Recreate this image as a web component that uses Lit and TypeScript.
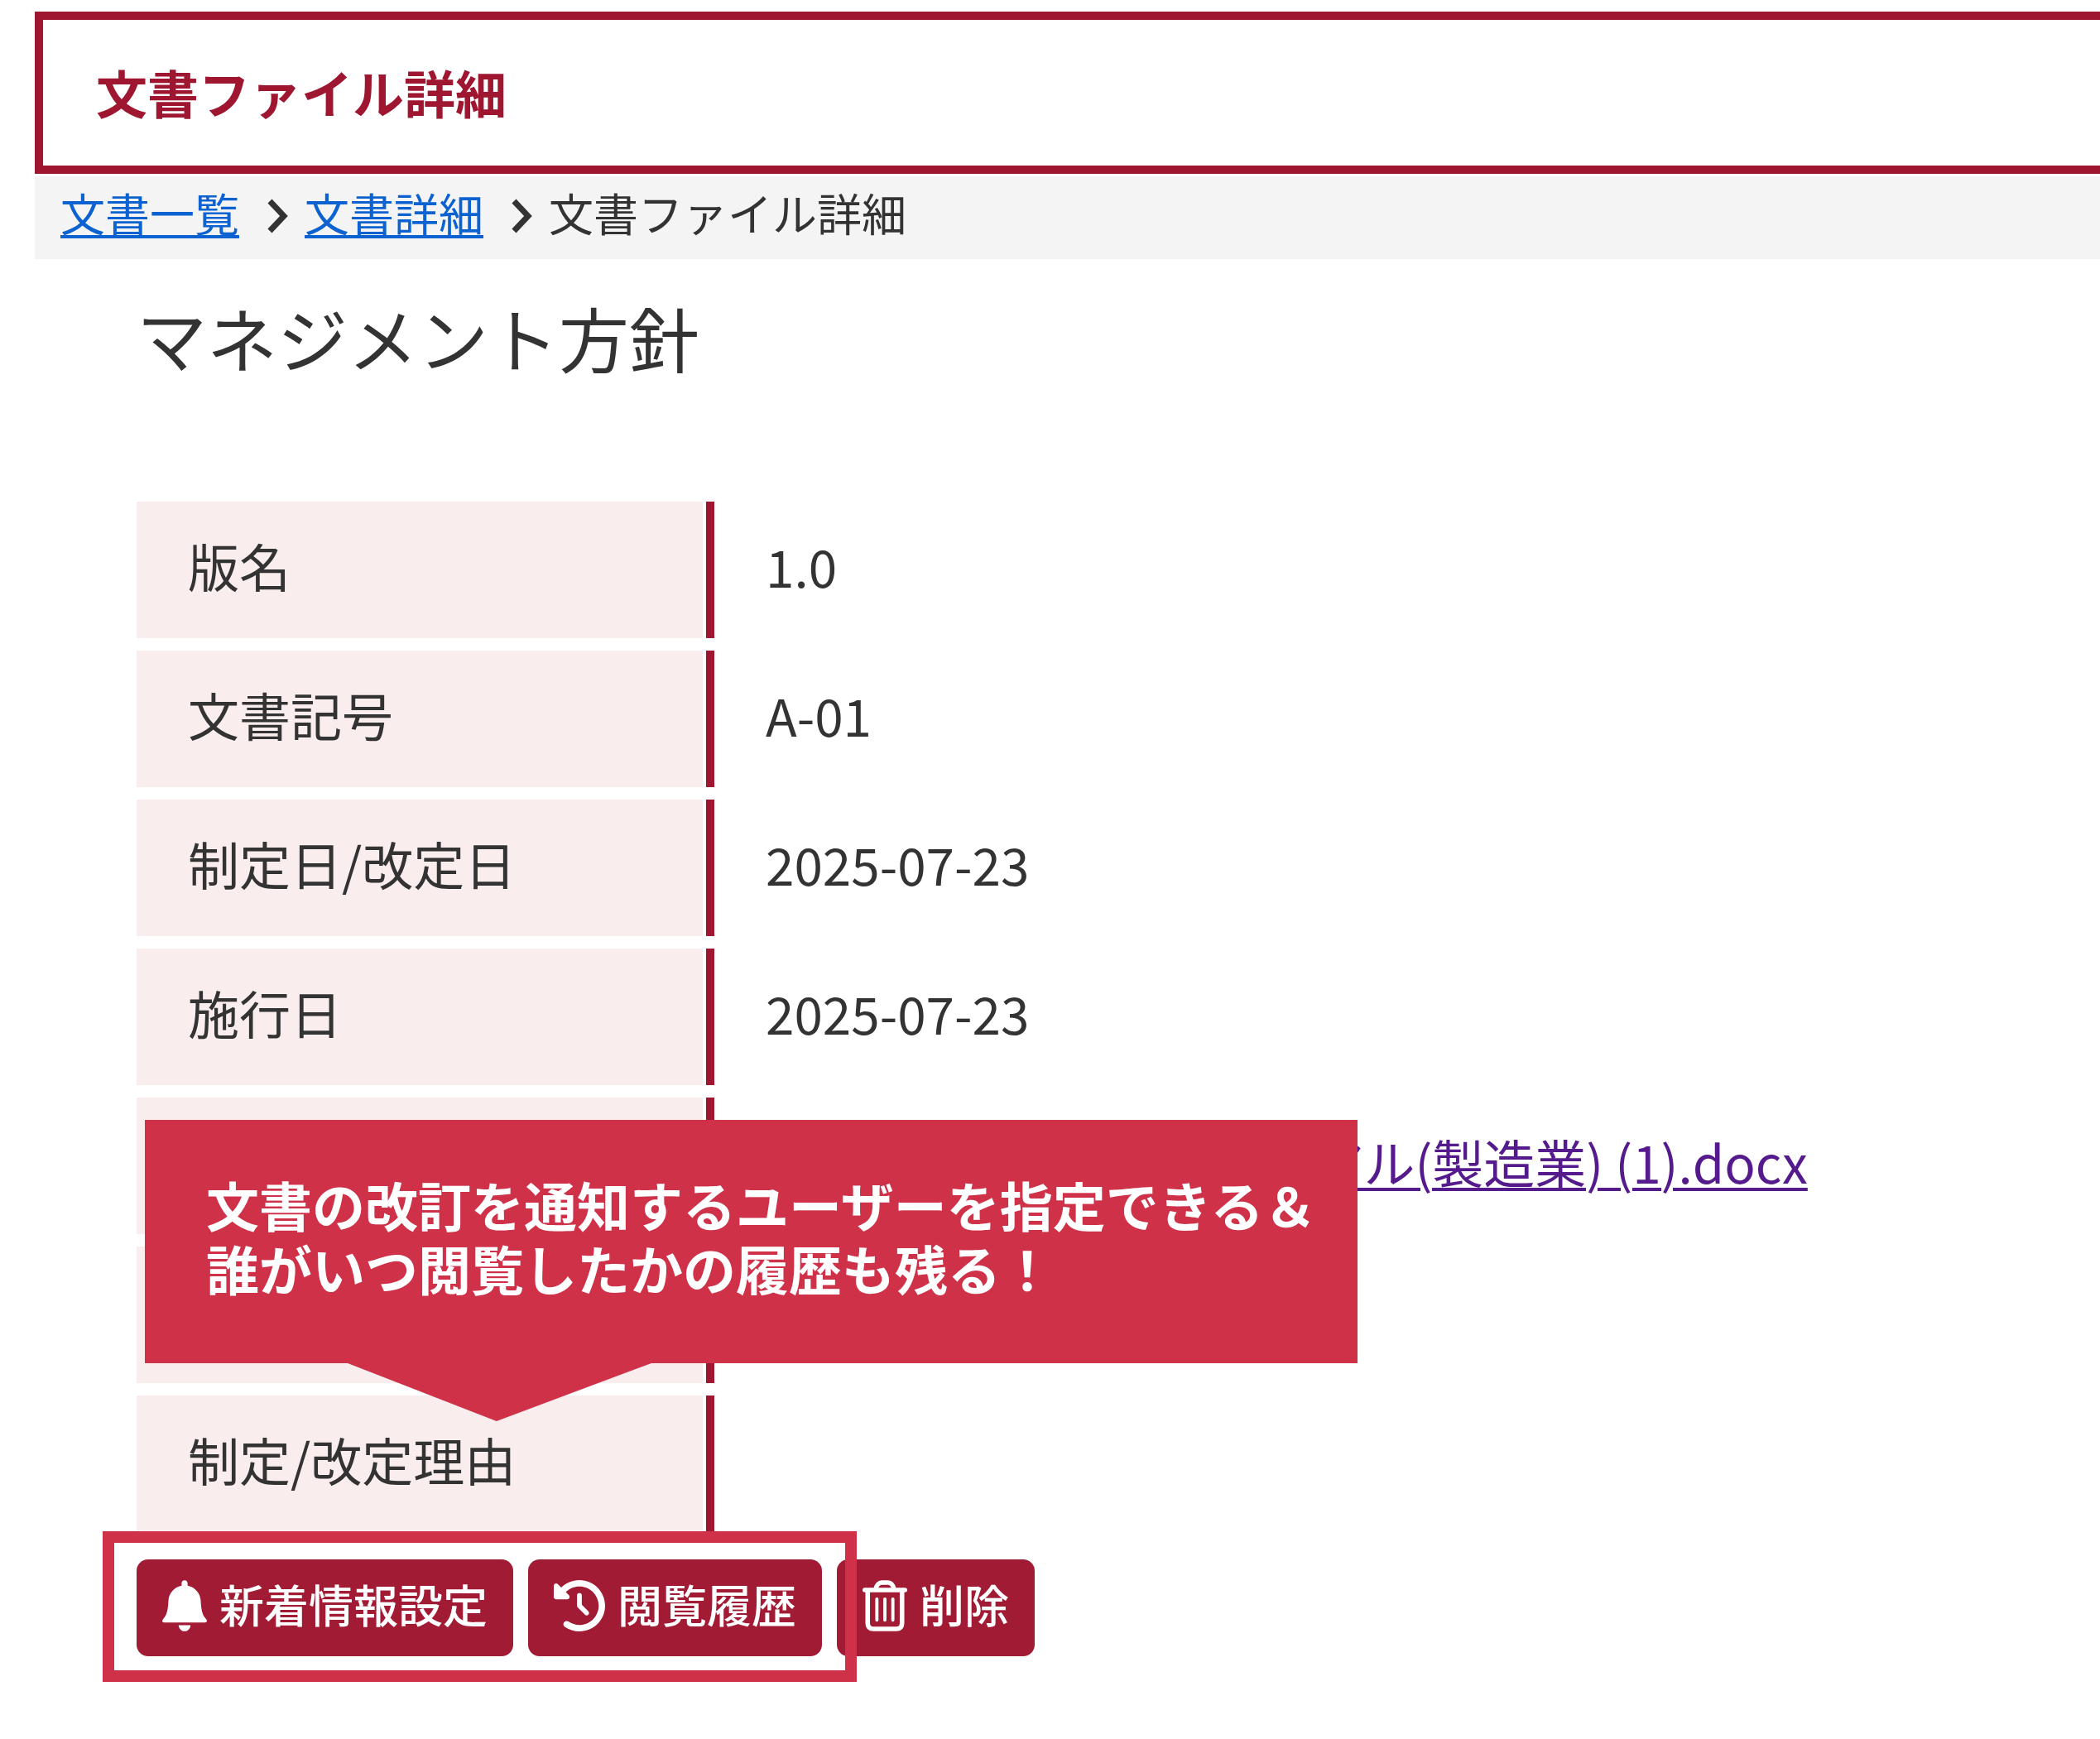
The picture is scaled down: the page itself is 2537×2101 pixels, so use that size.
import { LitElement, html, css } from "lit";
import { customElement } from "lit/decorators.js";

const bell = html`<svg class="icon" viewBox="0 0 448 512" aria-hidden="true"><path fill="currentColor" d="M224 0c-18 0-30 12-30 30v24C118 70 66 128 62 208c-4 80-14 132-40 164L4 396c-8 12-2 28 14 28h412c16 0 22-16 14-28l-18-24c-26-32-36-84-40-164-4-80-56-138-132-154V30c0-18-12-30-30-30zM164 450c2 36 30 62 60 62s58-26 60-62z"/></svg>`;
const history = html`<svg class="icon wide" viewBox="0 0 512 512" aria-hidden="true"><path fill="currentColor" d="M75 75L41 41C25.9 25.900 0 36.600 0 57.900V168c0 13.300 10.700 24 24 24H134.100c21.400 0 32.100-25.900 17-41l-30.800-30.800C155 85.500 203 64 256 64c106 0 192 86 192 192s-86 192-192 192c-40.800 0-78.600-12.700-109.700-34.400c-14.500-10.100-34.400-6.600-44.600 7.900s-6.600 34.400 7.900 44.600C151.200 495 201.700 512 256 512c141.400 0 256-114.600 256-256S397.400 0 256 0C185.300 0 121.300 28.700 75 75zm181 53c-13.300 0-24 10.700-24 24V256c0 6.400 2.500 12.500 7 17l72 72c9.400 9.400 24.600 9.400 33.900 0s9.400-24.600 0-33.900l-65-65V152c0-13.300-10.700-24-24-24z"/></svg>`;
const trash = html`<svg class="icon" viewBox="0 0 448 512" aria-hidden="true"><g fill="none" stroke="currentColor" stroke-linecap="round" stroke-linejoin="round"><path stroke-width="46" d="M23 98H425M52 98V430q0 58 58 58H338q58 0 58-58V98M130 94q18-70 62-70h64q44 0 62 70"/><path stroke-width="32" d="M144 188V400M224 188V400M304 188V400"/></g></svg>`;
const chevron = html`<svg class="chevron" viewBox="0 0 26 42" aria-hidden="true"><path fill="none" stroke="currentColor" stroke-width="7" d="M4 3L21 21L4 39"/></svg>`;

const rows = [
  { label: "版名", value: "1.0" },
  { label: "文書記号", value: "A-01" },
  { label: "制定日/改定日", value: "2025-07-23" },
  { label: "施行日", value: "2025-07-23" },
  { label: "", value: "アル(製造業) (1).docx", file: true },
  { label: "", value: "" },
  { label: "制定/改定理由", value: "" },
];

@customElement("app-root")
export class AppRoot extends LitElement {
  static styles = css`
    :host {
      display: block;
      padding: 14px 0 70px 42px;
      overflow: hidden;
      background: #fff;
      color: #333;
      font-family: "Noto Sans CJK JP", sans-serif;
      font-size: 62px;
      line-height: 90px;
    }
    .title {
      margin: 0 -10px 3px 0;
      padding: 42px 64px 44px;
      border: 10px solid #9f1631;
      color: #9f1631;
      font-size: 62px;
      font-weight: 700;
    }
    .crumbs {
      display: flex;
      align-items: center;
      gap: 20px;
      height: 100px;
      padding: 0 31px;
      background: #f4f4f4;
      font-size: 54px;
    }
    .crumb { padding-bottom: 12px; }
    .crumbs a {
      color: #0b62d0;
      text-decoration-thickness: 4px;
      text-underline-offset: 4px;
    }
    .chevron {
      width: 26px;
      height: 42px;
      margin: 0 0 4px 13px;
    }
    main { padding: 0 123px; }
    h2 {
      margin: 32px 0 137px;
      font-size: 85px;
      font-weight: 400;
      line-height: 124px;
    }
    .details { position: relative; }
    table {
      width: 100%;
      border-spacing: 0 15px;
      margin: -15px 0 18px;
      table-layout: fixed;
    }
    th, td {
      height: 165px;
      box-sizing: border-box;
      padding: 0 62px 12px;
      text-align: left;
      font-weight: 400;
      white-space: nowrap;
    }
    th {
      width: 698px;
      border-right: 10px solid #9f1631;
      box-shadow: inset -4px 0 #fff;
      background: #faeded;
    }
    .file {
      margin-left: 661px;
      color: #551a8b;
      text-decoration-thickness: 4px;
      text-underline-offset: 5px;
    }
    .actions {
      position: relative;
      display: flex;
      gap: 18px;
    }
    button {
      display: flex;
      align-items: center;
      gap: 15px;
      height: 117px;
      padding: 0 31px 6px;
      border: 0;
      border-radius: 14px;
      background: #a11b34;
      color: #fff;
      font: 500 54px/80px "Noto Sans CJK JP", sans-serif;
      white-space: nowrap;
    }
    .button-label { padding-bottom: 4px; }
    .icon { width: 54px; height: 62px; }
    .wide { width: 62px; }
    .frame {
      position: absolute;
      left: -41px;
      top: -34px;
      width: 911px;
      height: 182px;
      box-sizing: border-box;
      border: 14px solid #cf3149;
      pointer-events: none;
    }
    .callout {
      position: absolute;
      left: 10px;
      top: 762px;
      margin: 0;
      padding: 63px 50px 77px 74px;
      background: #cf3149;
      color: #fff;
      font-size: 64px;
      font-weight: 700;
      line-height: 77px;
      white-space: nowrap;
    }
    .callout::after {
      content: "";
      position: absolute;
      left: 245px;
      top: 100%;
      width: 367px;
      height: 70px;
      background: #cf3149;
      clip-path: polygon(0 0, 100% 0, 49% 100%);
    }
  `;

  render() {
    return html`
      <h1 class="title">文書ファイル詳細</h1>
      <nav class="crumbs" aria-label="パンくず">
        <a class="crumb" href="#list">文書一覧</a>${chevron}
        <a class="crumb" href="#document">文書詳細</a>${chevron}
        <span class="crumb">文書ファイル詳細</span>
      </nav>
      <main>
        <h2>マネジメント方針</h2>
        <div class="details">
          <table>
            ${rows.map(
              (r) => html`<tr>
                <th scope="row">${r.label}</th>
                <td>${r.file ? html`<a class="file" href="#file">${r.value}</a>` : r.value}</td>
              </tr>`
            )}
          </table>
          <p class="callout">文書の改訂を通知するユーザーを指定できる＆<br />誰がいつ閲覧したかの履歴も残る！</p>
        </div>
        <div class="actions">
          <button type="button">${bell}<span class="button-label">新着情報設定</span></button>
          <button type="button">${history}<span class="button-label">閲覧履歴</span></button>
          <button type="button">${trash}<span class="button-label">削除</span></button>
          <div class="frame"></div>
        </div>
      </main>
    `;
  }
}
